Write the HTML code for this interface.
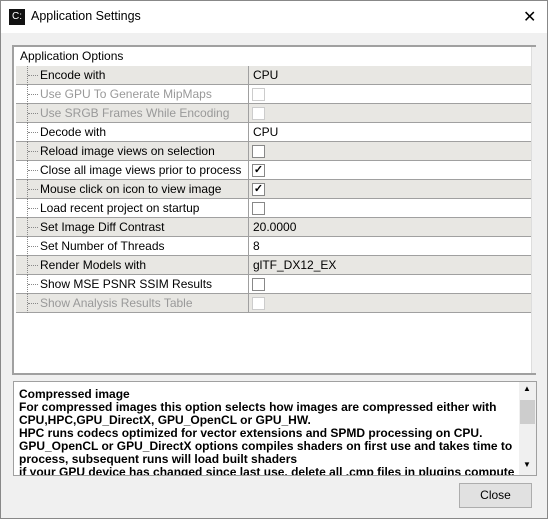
<html><head><style>
body{margin:0;width:548px;height:519px;background:#f0f0f0;font-family:"Liberation Sans",sans-serif;font-size:12px;position:relative;overflow:hidden;border:1px solid #888;box-sizing:border-box}
.title{position:absolute;left:0;top:0;width:546px;height:32px;background:#fff}
.title span{position:absolute;left:30px;top:8px;font-size:12.5px}
.ico{position:absolute;left:8px;top:8px;width:16px;height:16px;background:#111;color:#fff;font-size:10px;line-height:16px;text-align:center}
.x{position:absolute;left:522px;top:6px;font-size:16px}
.tree{position:absolute;left:11px;top:44px;width:522px;height:326px;border:2px solid #a0a0a0;border-right:none;background:#fff}
.scr{position:absolute;right:0;top:0;width:4px;height:100%;background:#f0f0f0;border-left:1px solid #ddd}
.hdr{position:absolute;left:6px;top:2px}
.row{position:absolute;left:2px;width:516px;height:18px;border-bottom:1px solid #a0a0a0}
.row.g{background:#e8e7e3}
.row .l{position:absolute;left:0;top:0;width:232px;height:18px;border-right:1px solid #a0a0a0}
.row .l span{position:absolute;left:24px;top:2px}
.row .l i{position:absolute;left:11px;top:0;height:19px;border-left:1px dotted #888}
.row .l b{position:absolute;left:12px;top:9px;width:10px;border-top:1px dotted #888}
.row .v{position:absolute;left:237px;top:2px}
.d{color:#999}
.cb{position:absolute;left:236px;top:3px;width:11px;height:11px;border:1px solid #888;background:#fff}
.cb.d{border-color:#ccc}
.help{position:absolute;left:12px;top:380px;width:522px;height:93px;border:1px solid #a0a0a0;background:#fff;overflow:hidden}
.help p{margin:0;position:absolute;left:5px;top:6px;font-weight:bold;font-size:12px;line-height:13px;width:500px}
.sb{position:absolute;right:0;top:0;width:17px;height:93px;background:#f0f0f0}
.btn{position:absolute;left:458px;top:482px;width:71px;height:23px;border:1px solid #adadad;background:#e1e1e1;text-align:center;line-height:23px}
</style></head><body>
<div class="title"><div class="ico">C:</div><span>Application Settings</span><div class="x">✕</div></div>
<div class="tree"><div class="hdr">Application Options</div>
<div class="row g" style="top:19px"><div class="l"><i></i><b></b><span>Encode with</span></div><div class="v">CPU</div></div>
<div class="row" style="top:38px"><div class="l"><i></i><b></b><span class="d">Use GPU To Generate MipMaps</span></div><div class="cb d"></div></div>
<div class="row g" style="top:57px"><div class="l"><i></i><b></b><span class="d">Use SRGB Frames While Encoding</span></div><div class="cb d"></div></div>
<div class="row" style="top:76px"><div class="l"><i></i><b></b><span>Decode with</span></div><div class="v">CPU</div></div>
<div class="row g" style="top:95px"><div class="l"><i></i><b></b><span>Reload image views on selection</span></div><div class="cb"></div></div>
<div class="row" style="top:114px"><div class="l"><i></i><b></b><span>Close all image views prior to process</span></div><div class="cb" style="text-align:center;line-height:11px;font-size:11px;font-weight:bold">✓</div></div>
<div class="row g" style="top:133px"><div class="l"><i></i><b></b><span>Mouse click on icon to view image</span></div><div class="cb" style="text-align:center;line-height:11px;font-size:11px;font-weight:bold">✓</div></div>
<div class="row" style="top:152px"><div class="l"><i></i><b></b><span>Load recent project on startup</span></div><div class="cb"></div></div>
<div class="row g" style="top:171px"><div class="l"><i></i><b></b><span>Set Image Diff Contrast</span></div><div class="v">20.0000</div></div>
<div class="row" style="top:190px"><div class="l"><i></i><b></b><span>Set Number of Threads</span></div><div class="v">8</div></div>
<div class="row g" style="top:209px"><div class="l"><i></i><b></b><span>Render Models with</span></div><div class="v">glTF_DX12_EX</div></div>
<div class="row" style="top:228px"><div class="l"><i></i><b></b><span>Show MSE PSNR SSIM Results</span></div><div class="cb"></div></div>
<div class="row g" style="top:247px"><div class="l"><i></i><b></b><span class="d">Show Analysis Results Table</span></div><div class="cb d"></div></div>
<div class="scr"></div></div>
<div class="help"><p>Compressed image<br>For compressed images this option selects how images are compressed either with CPU,HPC,GPU_DirectX, GPU_OpenCL or GPU_HW.<br>HPC runs codecs optimized for vector extensions and SPMD processing on CPU.<br>GPU_OpenCL or GPU_DirectX options compiles shaders on first use and takes time to process, subsequent runs will load built shaders<br>if your GPU device has changed since last use, delete all .cmp files in plugins compute</p>
<div class="sb"><div style="position:absolute;top:2px;left:4px;font-size:8px">▲</div><div style="position:absolute;top:18px;left:1px;width:15px;height:24px;background:#cdcdcd"></div><div style="position:absolute;top:78px;left:4px;font-size:8px">▼</div></div></div>
<div class="btn">Close</div>
</body></html>
